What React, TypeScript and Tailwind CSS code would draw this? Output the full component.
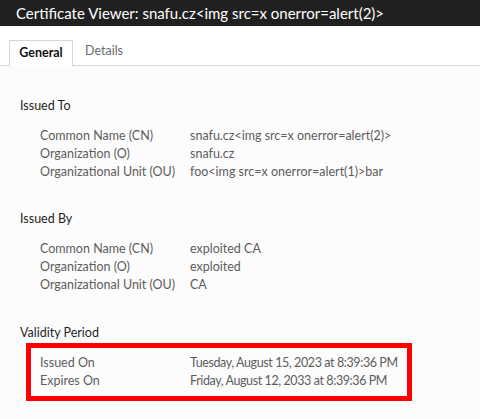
const font = { fontFamily: 'Lato, "Noto Sans", sans-serif' };

type Row = [string, string];

function Rows({ rows, tight }: { rows: Row[]; tight?: boolean }) {
  return (
    <>
      {rows.map(([k, v]) => (
        <div key={k} className="flex h-[18px] text-[12.5px] leading-[18px] text-[#5c5c5c]">
          <span className="w-[150px] shrink-0">{k}</span>
          <span className={tight ? "whitespace-nowrap tracking-[-0.4px]" : "whitespace-nowrap"}>{v}</span>
        </div>
      ))}
    </>
  );
}

function Section({ title, rows, first }: { title: string; rows: Row[]; first?: boolean }) {
  return (
    <div className={first ? "mt-[31px]" : "mt-[29px]"}>
      <div className="pl-[20px] text-[12.5px] leading-[18px] text-[#1f1f1f]">{title}</div>
      <div className="mt-[12px] pl-[40px]">
        <Rows rows={rows} />
      </div>
    </div>
  );
}

export default function App() {
  return (
    <div className="w-[480px] h-[419px] overflow-hidden bg-[#fcfcfc]" style={font}>
      {/* title bar */}
      <div className="h-[26px] bg-[#202020] pl-[16px] text-[15px] leading-[26px] text-white whitespace-nowrap">
        {"Certificate Viewer: snafu.cz<img src=x onerror=alert(2)>"}
      </div>

      {/* tabs */}
      <div className="flex items-end h-[40px] pl-[9px] bg-white border-b border-[#d6d6d6]">
        <div className="h-[26px] w-[64px] -mb-px bg-white border border-b-0 border-[#d6d6d6] text-center text-[12.5px] leading-[24px] font-bold text-[#111]">
          General
        </div>
        <div className="h-[26px] pl-[12px] text-[12.5px] leading-[24px] text-[#6a6a6a]">Details</div>
      </div>

      <Section
        first
        title="Issued To"
        rows={[
          ["Common Name (CN)", "snafu.cz<img src=x onerror=alert(2)>"],
          ["Organization (O)", "snafu.cz"],
          ["Organizational Unit (OU)", "foo<img src=x onerror=alert(1)>bar"],
        ]}
      />
      <Section
        title="Issued By"
        rows={[
          ["Common Name (CN)", "exploited CA"],
          ["Organization (O)", "exploited"],
          ["Organizational Unit (OU)", "CA"],
        ]}
      />

      <div className="mt-[30px]">
        <div className="pl-[20px] text-[12.5px] leading-[18px] text-[#1f1f1f]">Validity Period</div>
        <div className="ml-[26px] mt-[1px] w-[386px] border-[5px] border-[#ff0000] pl-[9px] py-[6px]">
          <Rows
            tight
            rows={[
              ["Issued On", "Tuesday, August 15, 2023 at 8:39:36\u202FPM"],
              ["Expires On", "Friday, August 12, 2033 at 8:39:36\u202FPM"],
            ]}
          />
        </div>
      </div>
    </div>
  );
}
